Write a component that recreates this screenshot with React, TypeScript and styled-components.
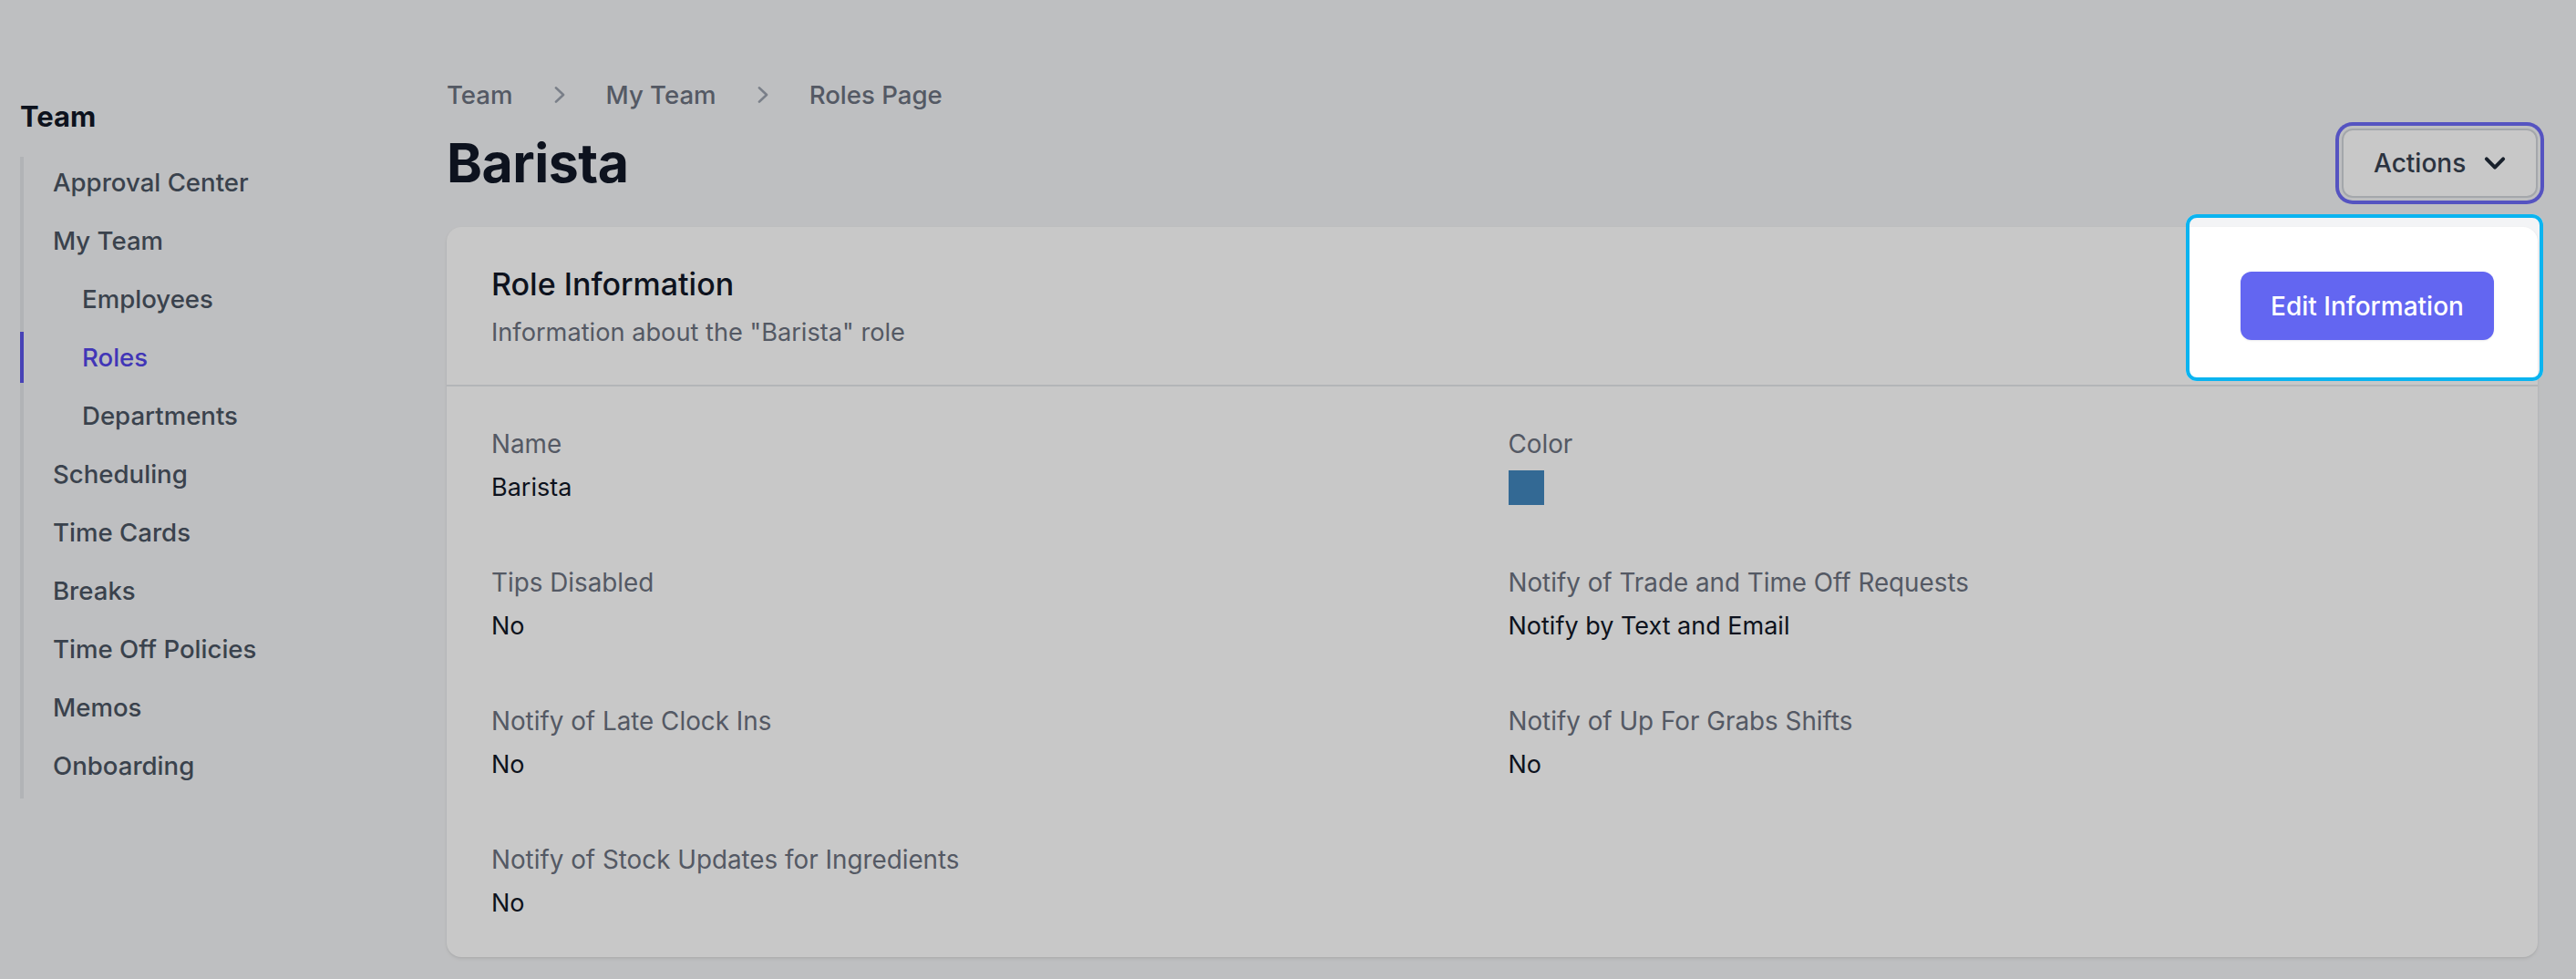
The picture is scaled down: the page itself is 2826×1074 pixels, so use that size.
import React from "react";
import styled, { createGlobalStyle } from "styled-components";

const GlobalStyle = createGlobalStyle`
  html, body { margin: 0; padding: 0; background: #f3f4f6; }
  body { font-family: Inter, "Noto Sans", sans-serif; -webkit-font-smoothing: antialiased; }
  *, *::before, *::after { box-sizing: border-box; }
`;

const Page = styled.div`
  position: relative;
  display: flex;
  min-height: 1074px;
  padding-left: 22px;
  overflow: hidden;
`;

const Sidebar = styled.aside`
  width: 400px;
  flex-shrink: 0;
  padding-top: 106px;
`;

const SidebarTitle = styled.h2`
  margin: 0 0 22px;
  font-size: 31px;
  line-height: 44px;
  font-weight: 700;
  color: #111827;
`;

const NavList = styled.ul`
  margin: 0;
  padding: 0 0 8px;
  list-style: none;
  display: flex;
  flex-direction: column;
  gap: 8px;
  border-left: 4px solid #e2e4e9;
`;

const NavItem = styled.li<{ $active?: boolean; $sub?: boolean }>`
  height: 56px;
  display: flex;
  align-items: center;
  margin-left: -4px;
  border-left: 4px solid ${(p) => (p.$active ? "#5b55e8" : "transparent")};
  padding-left: ${(p) => (p.$sub ? 64 : 32)}px;
  font-size: 27.6px;
  font-weight: 500;
  color: ${(p) => (p.$active ? "#5346ea" : "#4b5563")};
`;

const Main = styled.main`
  flex: 1;
  padding: 84px 42px 0 68px;
`;

const Breadcrumb = styled.nav`
  display: flex;
  align-items: center;
  gap: 33px;
  height: 40px;
  font-size: 27.6px;
  font-weight: 500;
  color: #6b7280;
`;

const Crumb = styled.span`
  line-height: 40px;
`;

const TitleRow = styled.div`
  margin-top: 17px;
  height: 76px;
  display: flex;
  align-items: center;
  justify-content: space-between;
`;

const Title = styled.h1`
  margin: 0;
  font-size: 59px;
  line-height: 76px;
  font-weight: 700;
  color: #111827;
  letter-spacing: -0.5px;
`;

const ActionsButton = styled.button`
  width: 215px;
  height: 76px;
  padding: 0 26px 0 33px;
  display: flex;
  align-items: center;
  justify-content: space-between;
  background: #ffffff;
  border: 2px solid #d1d5db;
  border-radius: 12px;
  font-family: inherit;
  font-size: 28px;
  font-weight: 500;
  color: #374151;
  box-shadow: 0 0 0 3px #f3f4f6, 0 0 0 7px #6d6af6;
`;

const Card = styled.section`
  margin-top: 32px;
  background: #ffffff;
  border-radius: 16px;
  box-shadow: 0 2px 4px rgba(0, 0, 0, 0.07), 0 1px 2px rgba(0, 0, 0, 0.05);
`;

const CardHeader = styled.header`
  height: 175px;
  padding: 0 48px 0 49px;
  display: flex;
  align-items: center;
  justify-content: space-between;
  border-bottom: 2px solid #e5e7eb;
`;

const HeaderText = styled.div`
  display: flex;
  flex-direction: column;
  gap: 11px;
  padding-top: 4px;
`;

const CardTitle = styled.h3`
  margin: 0;
  font-size: 34px;
  line-height: 44px;
  font-weight: 500;
  color: #111827;
`;

const CardSubtitle = styled.p`
  margin: 0;
  font-size: 27.2px;
  line-height: 40px;
  color: #6b7280;
`;

const PrimaryButton = styled.button`
  width: 278px;
  height: 75px;
  border: none;
  border-radius: 12px;
  background: #6366f1;
  color: #ffffff;
  font-family: inherit;
  font-size: 28px;
  font-weight: 500;
  box-shadow: 0 1px 2px rgba(0, 0, 0, 0.08);
`;

const FieldGrid = styled.dl`
  margin: 0;
  padding: 43px 48px 39px 49px;
  display: grid;
  grid-template-columns: 1fr 1fr;
  column-gap: 34px;
  row-gap: 64px;
`;

const Field = styled.div`
  display: flex;
  flex-direction: column;
  gap: 8px;
`;

const Label = styled.dt`
  font-size: 27.8px;
  line-height: 40px;
  color: #6b7280;
`;

const Value = styled.dd`
  margin: 0;
  height: 40px;
  display: flex;
  align-items: center;
  font-size: 27px;
  line-height: 40px;
  color: #111827;
`;

const Swatch = styled.span<{ $color: string }>`
  display: block;
  width: 39px;
  height: 38px;
  background: ${(p) => p.$color};
`;

const Spotlight = styled.div`
  position: absolute;
  left: 2398px;
  top: 235px;
  width: 392px;
  height: 183px;
  border: 4px solid #0bb4f0;
  border-radius: 12px;
  box-shadow: 0 0 0 4000px rgba(0, 0, 0, 0.216);
  pointer-events: none;
  z-index: 10;
`;

const ChevronRight = () => (
  <svg width="36" height="36" viewBox="0 0 20 20" fill="#9ca3af" aria-hidden="true">
    <path
      fillRule="evenodd"
      d="M7.21 14.77a.75.75 0 01.02-1.06L11.168 10 7.23 6.29a.75.75 0 111.04-1.08l4.5 4.25a.75.75 0 010 1.08l-4.5 4.25a.75.75 0 01-1.06-.02z"
      clipRule="evenodd"
    />
  </svg>
);

const ChevronDown = () => (
  <svg width="38" height="38" viewBox="0 0 20 20" fill="none" aria-hidden="true">
    <path
      d="M5.2 7.6L10 12.4L14.8 7.6"
      stroke="#1f2937"
      strokeWidth="2.1"
      strokeLinecap="round"
      strokeLinejoin="round"
    />
  </svg>
);

const navItems: { label: string; sub?: boolean; active?: boolean }[] = [
  { label: "Approval Center" },
  { label: "My Team" },
  { label: "Employees", sub: true },
  { label: "Roles", sub: true, active: true },
  { label: "Departments", sub: true },
  { label: "Scheduling" },
  { label: "Time Cards" },
  { label: "Breaks" },
  { label: "Time Off Policies" },
  { label: "Memos" },
  { label: "Onboarding" },
];

const fields: { label: string; value?: string; color?: string }[] = [
  { label: "Name", value: "Barista" },
  { label: "Color", color: "#4287bd" },
  { label: "Tips Disabled", value: "No" },
  { label: "Notify of Trade and Time Off Requests", value: "Notify by Text and Email" },
  { label: "Notify of Late Clock Ins", value: "No" },
  { label: "Notify of Up For Grabs Shifts", value: "No" },
  { label: "Notify of Stock Updates for Ingredients", value: "No" },
];

export default function App() {
  return (
    <>
      <GlobalStyle />
      <Page>
        <Sidebar>
          <SidebarTitle>Team</SidebarTitle>
          <NavList>
            {navItems.map((n) => (
              <NavItem key={n.label} $sub={n.sub} $active={n.active}>
                {n.label}
              </NavItem>
            ))}
          </NavList>
        </Sidebar>
        <Main>
          <Breadcrumb>
            <Crumb>Team</Crumb>
            <ChevronRight />
            <Crumb>My Team</Crumb>
            <ChevronRight />
            <Crumb>Roles Page</Crumb>
          </Breadcrumb>
          <TitleRow>
            <Title>Barista</Title>
            <ActionsButton>
              Actions
              <ChevronDown />
            </ActionsButton>
          </TitleRow>
          <Card>
            <CardHeader>
              <HeaderText>
                <CardTitle>Role Information</CardTitle>
                <CardSubtitle>Information about the "Barista" role</CardSubtitle>
              </HeaderText>
              <PrimaryButton>Edit Information</PrimaryButton>
            </CardHeader>
            <FieldGrid>
              {fields.map((f) => (
                <Field key={f.label}>
                  <Label>{f.label}</Label>
                  <Value>{f.color ? <Swatch $color={f.color} /> : f.value}</Value>
                </Field>
              ))}
            </FieldGrid>
          </Card>
        </Main>
        <Spotlight />
      </Page>
    </>
  );
}
